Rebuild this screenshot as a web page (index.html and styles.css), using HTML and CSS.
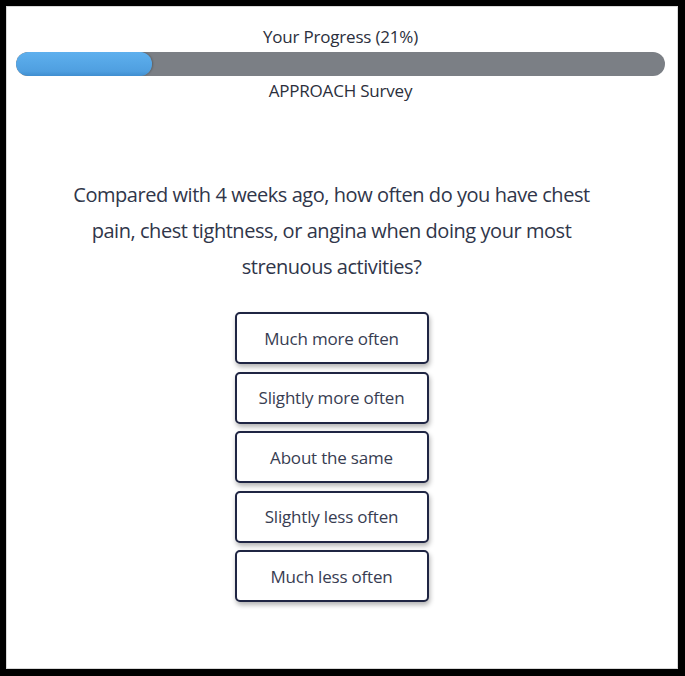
FILE: index.html
```html
<!DOCTYPE html>
<html lang="en">
<head>
<meta charset="utf-8">
<title>APPROACH Survey</title>
<link rel="stylesheet" href="styles.css">
</head>
<body>
<main class="panel">
  <header class="progress">
    <div class="progress-label">Your Progress (21%)</div>
    <div class="progress-track"><div class="progress-fill" style="width:21%"></div></div>
    <div class="survey-name">APPROACH Survey</div>
  </header>
  <section class="question">
    <h1 class="question-text">Compared with 4 weeks ago, how often do you have chest pain, chest tightness, or angina when doing your most strenuous activities?</h1>
    <div class="options">
      <button class="option">Much more often</button>
      <button class="option">Slightly more often</button>
      <button class="option">About the same</button>
      <button class="option">Slightly less often</button>
      <button class="option">Much less often</button>
    </div>
  </section>
</main>
</body>
</html>
```
FILE: styles.css
```css
html, body {
  margin: 0;
  padding: 0;
  background: #000;
}
body {
  padding: 6px 7px 7px 6px;
  font-family: "Open Sans", "Liberation Sans", sans-serif;
  color: #2f3446;
}
.panel {
  background: #fff;
  height: 663px;
  box-sizing: border-box;
  border: 1px solid #d8d8d8;
  padding: 19px 12px 0 9px;
}
.progress {
  display: flex;
  flex-direction: column;
  align-items: center;
}
.progress-label,
.survey-name {
  font-size: 17px;
  line-height: 22px;
  letter-spacing: -0.2px;
  color: #2b2f3c;
}
.progress-track {
  align-self: stretch;
  height: 24px;
  margin: 4px 0 4px;
  background: #7b7f85;
  border-radius: 12px;
  overflow: hidden;
}
.progress-fill {
  height: 100%;
  background: linear-gradient(#5eb0ee, #4f9fe0 80%, #3f8ed0);
  border-radius: 12px;
  box-shadow: 1px 0 2px rgba(0,0,0,0.25);
}
.question {
  display: flex;
  flex-direction: column;
  align-items: center;
  padding: 75px 18px 0 0;
}
.question-text {
  margin: 0 0 27px;
  max-width: 540px;
  text-align: center;
  font-weight: 400;
  font-size: 20px;
  line-height: 36px;
  letter-spacing: -0.45px;
  color: #30364a;
}
.options {
  display: flex;
  flex-direction: column;
  gap: 7.5px;
}
.option {
  width: 194px;
  height: 52px;
  box-sizing: border-box;
  background: #fff;
  border: 2px solid #1f2543;
  border-radius: 5px;
  box-shadow: 1px 3px 5px rgba(0,0,0,0.3);
  font-family: "Open Sans", "Liberation Sans", sans-serif;
  font-size: 17px;
  letter-spacing: -0.2px;
  color: #383d52;
  padding: 0;
}
```
